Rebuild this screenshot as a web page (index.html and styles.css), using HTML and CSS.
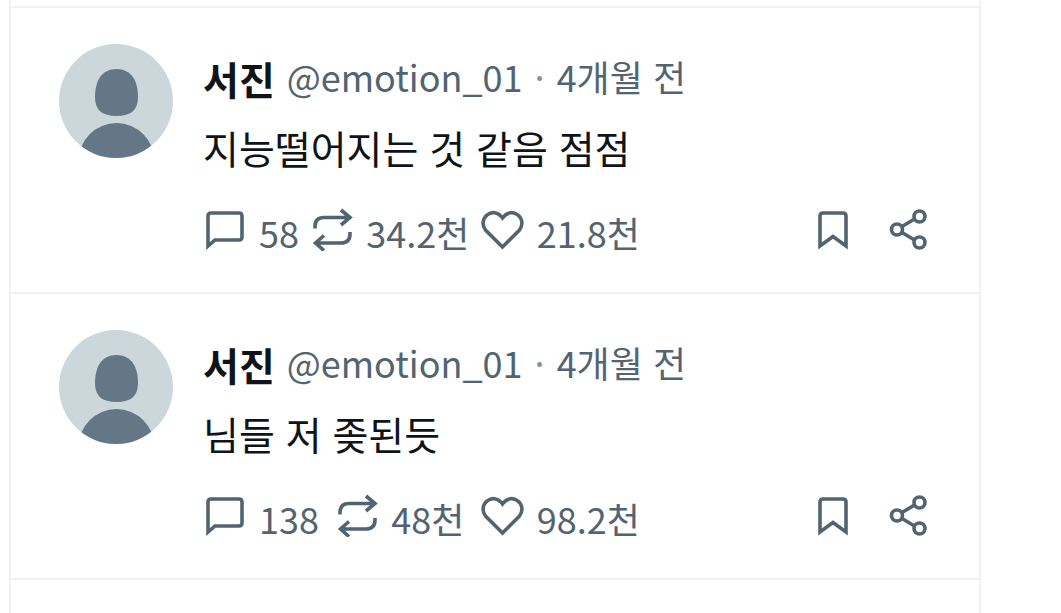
FILE: index.html
```html
<!DOCTYPE html>
<html lang="ko">
<head>
    <meta charset="UTF-8">
    <title>서진</title>
    <link rel="stylesheet" href="styles.css">
</head>
<body>
<svg class="sprite" aria-hidden="true">
    <symbol id="avatar" viewBox="0 0 114 114">
        <path d="M57.500 25c15 0 21.500 12 21.500 28 0 13-7 19-21.500 19s-21.500-6-21.500-19c0-16 6.500-28 21.500-28z"/>
        <circle cx="57.500" cy="117" r="38"/>
    </symbol>
    <symbol id="comment" viewBox="0 0 44 44" stroke-width="3.600">
        <path d="M5 39V9q0-3 3-3h28q3 0 3 3v21q0 3-3 3H12z"/>
    </symbol>
    <symbol id="retweet" viewBox="0 0 44 44" stroke-width="3.600">
        <path d="M5 21.500v-2q0-9 9-9h26M31 3l9 7.500-9 7.500M40 25v2q0 9-9 9H6M14 28.500l-8.500 7.500 8.500 7.500"/>
    </symbol>
    <symbol id="heart" viewBox="0 0 44 44" stroke-width="3.600">
        <path d="M21.500 40L4.500 23C-4 11.500 12-2 21.500 11 31-2 47 11.500 38.500 23z"/>
    </symbol>
    <symbol id="bookmark" viewBox="0 0 44 44" stroke-width="3.600">
        <path d="M9 39V9q0-3 3-3h20q3 0 3 3v30l-13-9.500z"/>
    </symbol>
    <symbol id="share" viewBox="0 0 44 44" stroke-width="3.600">
        <circle cx="10" cy="22.500" r="5.500"/>
        <circle cx="32.500" cy="9.500" r="5.500"/>
        <circle cx="32.500" cy="35.500" r="5.500"/>
        <path d="M15 19.500l12.500-7.500M15 25.500l12.500 7.500"/>
    </symbol>
</svg>
<main class="feed">
    <article class="post">
        <svg class="avatar"><use href="#avatar"/></svg>
        <div class="content">
            <header class="meta">
                <strong class="name">서진</strong>
                <span>@emotion_01</span>
                <span class="dot">·</span>
                <span>4개월 전</span>
            </header>
            <p class="text">지능떨어지는 것 같음 점점</p>
            <div class="actions">
                <div class="stats">
                    <button class="action"><svg class="icon"><use href="#comment"/></svg><span>58</span></button>
                    <button class="action"><svg class="icon"><use href="#retweet"/></svg><span>34.2천</span></button>
                    <button class="action"><svg class="icon"><use href="#heart"/></svg><span>21.8천</span></button>
                </div>
                <div class="tools">
                    <button class="action" aria-label="북마크"><svg class="icon"><use href="#bookmark"/></svg></button>
                    <button class="action" aria-label="공유"><svg class="icon"><use href="#share"/></svg></button>
                </div>
            </div>
        </div>
    </article>
    <article class="post">
        <svg class="avatar"><use href="#avatar"/></svg>
        <div class="content">
            <header class="meta">
                <strong class="name">서진</strong>
                <span>@emotion_01</span>
                <span class="dot">·</span>
                <span>4개월 전</span>
            </header>
            <p class="text">님들 저 좆된듯</p>
            <div class="actions">
                <div class="stats">
                    <button class="action"><svg class="icon"><use href="#comment"/></svg><span>138</span></button>
                    <button class="action"><svg class="icon"><use href="#retweet"/></svg><span>48천</span></button>
                    <button class="action"><svg class="icon"><use href="#heart"/></svg><span>98.2천</span></button>
                </div>
                <div class="tools">
                    <button class="action" aria-label="북마크"><svg class="icon"><use href="#bookmark"/></svg></button>
                    <button class="action" aria-label="공유"><svg class="icon"><use href="#share"/></svg></button>
                </div>
            </div>
        </div>
    </article>
</main>
</body>
</html>
```
FILE: styles.css
```css
*{
    margin: 0;
    padding: 0;
    box-sizing: border-box;
}
body{
    background-color: #fff;
    color: #0f1419;
    font-family: "Noto Sans CJK KR", sans-serif;
}
.sprite{
    display: none;
}
.feed{
    min-height: 100vh;
    margin: 0 80px 0 9px;
    padding-top: 6px;
    border-left: 2px solid #eff3f4;
    border-right: 2px solid #eff3f4;
}
.post{
    display: flex;
    gap: 30px;
    padding: 36px 48px 34px;
    border-top: 2px solid #eff3f4;
}
.post:last-child{
    border-bottom: 2px solid #eff3f4;
}
.avatar{
    flex: none;
    width: 114px;
    height: 114px;
    border-radius: 50%;
    background-color: #ccd7db;
    fill: #657786;
}
.content{
    flex: 1;
    min-width: 0;
}
.meta{
    display: flex;
    align-items: flex-start;
    gap: 12px;
    font-size: 36px;
    line-height: 64px;
    color: #536471;
}
.name{
    font-size: 39px;
    line-height: 68px;
    color: #0f1419;
}
.dot{
    opacity: 0.7;
}
.text{
    font-size: 39px;
    line-height: 70px;
}
.actions{
    display: flex;
    justify-content: space-between;
    padding-top: 24px;
}
.stats{
    display: flex;
    justify-content: space-between;
    width: 60%;
}
.tools{
    display: flex;
    gap: 32px;
}
.action{
    display: flex;
    gap: 12px;
    border: none;
    background: none;
    color: #536471;
    font-family: inherit;
    font-size: 36px;
    line-height: 52px;
    cursor: pointer;
}
.icon{
    width: 44px;
    height: 44px;
    margin-top: 1px;
    fill: none;
    stroke: #536471;
}
```
